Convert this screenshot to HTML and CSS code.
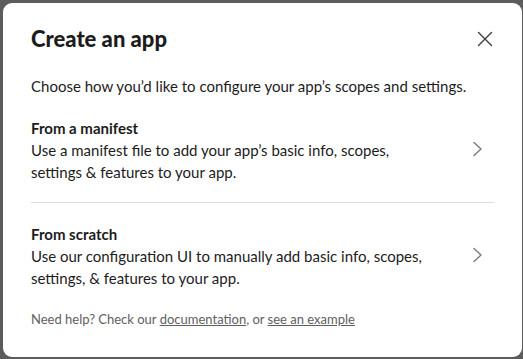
FILE: index.html
```html
<!DOCTYPE html>
<html>
<head>
<meta charset="utf-8">
<link rel="stylesheet" href="styles.css">
</head>
<body>
<div class="modal">
  <div class="header">
    <h1 class="title">Create an app</h1>
    <button class="close" aria-label="Close">
      <svg width="16" height="16" viewBox="0 0 16 16"><path d="M1.5 1.5 L14.5 14.5 M14.5 1.5 L1.5 14.5" stroke="#3d3d3d" stroke-width="1.4" fill="none" stroke-linecap="round"/></svg>
    </button>
  </div>
  <p class="intro">Choose how you’d like to configure your app’s scopes and settings.</p>
  <div class="option">
    <div class="option-text">
      <div class="option-title">From a manifest</div>
      <div class="option-desc">Use a manifest file to add your app’s basic info, scopes, settings &amp; features to your app.</div>
    </div>
    <svg class="chev" width="11" height="16" viewBox="0 0 11 16"><path d="M2 1.5 L9 8 L2 14.5" stroke="#7a7a7a" stroke-width="1.4" fill="none" stroke-linecap="round" stroke-linejoin="round"/></svg>
  </div>
  <div class="divider"></div>
  <div class="option">
    <div class="option-text">
      <div class="option-title">From scratch</div>
      <div class="option-desc">Use our configuration UI to manually add basic info, scopes, settings, &amp; features to your app.</div>
    </div>
    <svg class="chev" width="11" height="16" viewBox="0 0 11 16"><path d="M2 1.5 L9 8 L2 14.5" stroke="#7a7a7a" stroke-width="1.4" fill="none" stroke-linecap="round" stroke-linejoin="round"/></svg>
  </div>
  <p class="help">Need help? Check our <a href="#">documentation</a>, or <a href="#">see an example</a></p>
</div>
</body>
</html>
```
FILE: styles.css
```css
html, body {
  margin: 0;
  padding: 0;
  background: #5c5c5c;
  width: 523px;
  height: 359px;
  overflow: hidden;
}
body {
  padding: 3px 1px 0 3px;
  box-sizing: border-box;
  font-family: Lato, "Noto Sans", sans-serif;
  color: #1d1c1d;
}
.modal {
  background: #fff;
  border-radius: 9px;
  width: 519px;
  height: 354px;
  box-sizing: border-box;
  padding: 22px 28px 0 28px;
}
.header {
  display: flex;
  justify-content: space-between;
  align-items: center;
}
.title {
  margin: 0;
  font-size: 22px;
  font-weight: 900;
  line-height: 28px;
}
.close {
  border: none;
  background: none;
  padding: 0;
  margin-right: 1px;
  width: 16px;
  height: 16px;
  display: flex;
}
.intro {
  margin: 22px 0 0 0;
  font-size: 15px;
  line-height: 22px;
}
.option {
  display: flex;
  align-items: center;
  justify-content: space-between;
  padding: 20px 0 19px 0;
}
.option-title {
  font-weight: 700;
  font-size: 15px;
  line-height: 22px;
}
.option-desc {
  font-size: 15px;
  line-height: 22px;
  width: 400px;
}
.chev {
  margin-right: 11px;
  margin-top: -3px;
}
.divider {
  height: 1px;
  background: #dddddd;
}
.help {
  margin: 1px 0 0 0;
  font-size: 13px;
  line-height: 20px;
  color: #616061;
}
.help a {
  color: #616061;
  text-decoration: underline;
}
```
